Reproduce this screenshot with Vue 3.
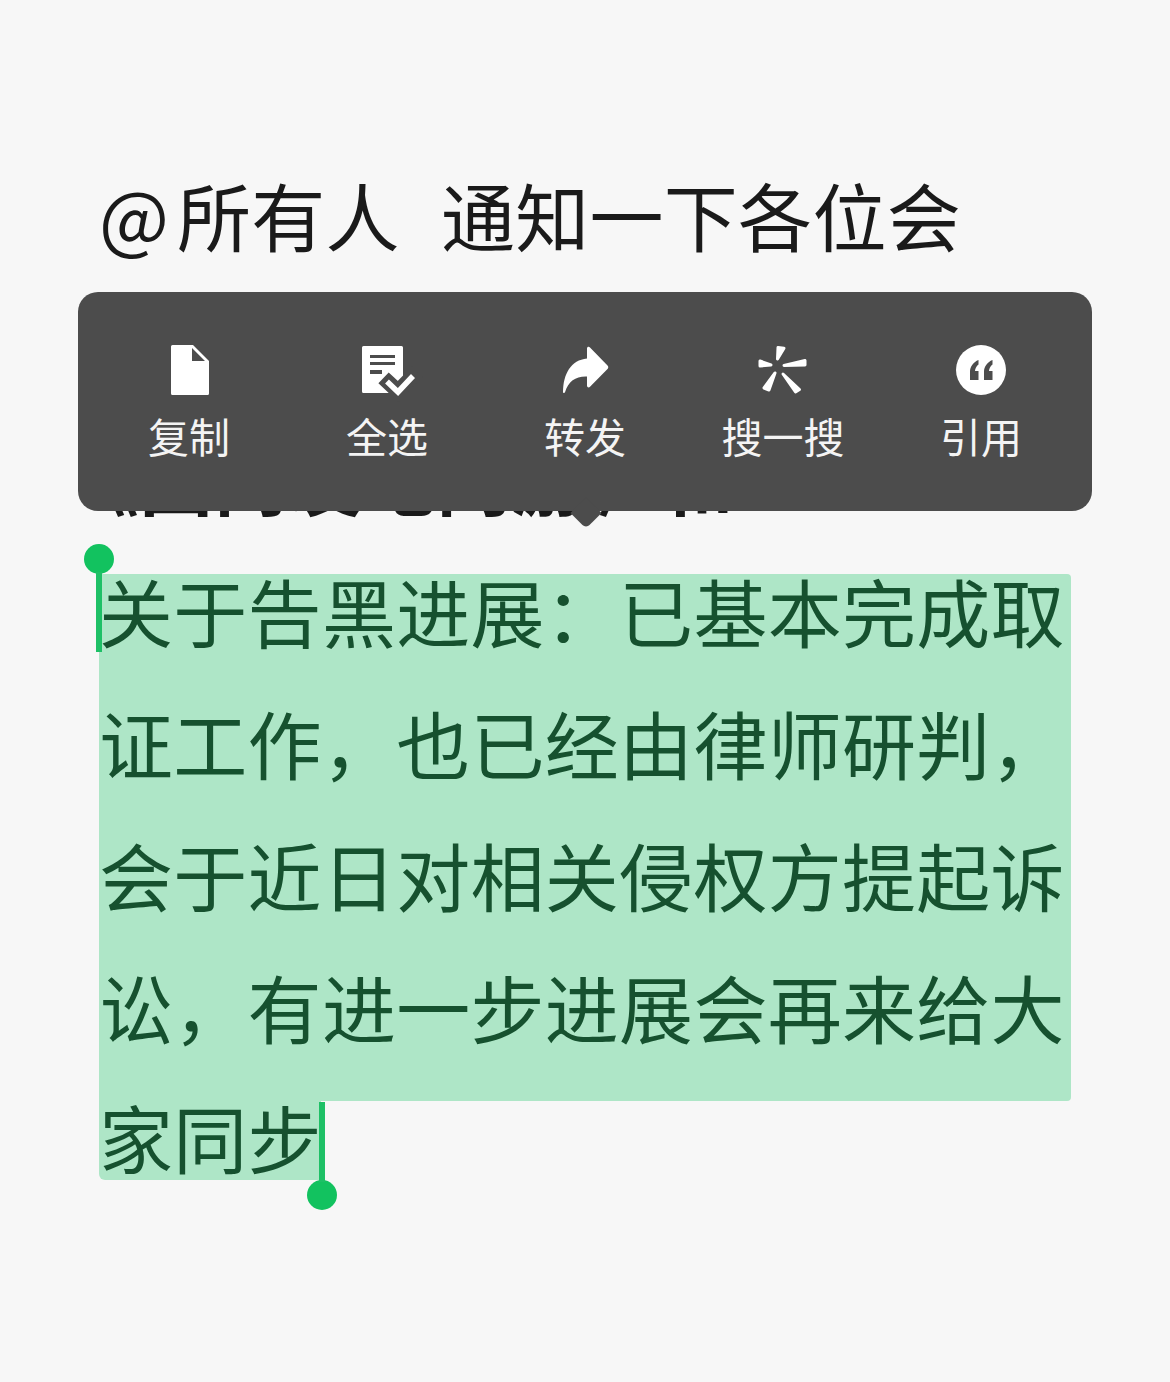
<script setup>
const fullLines = [
  '关于告黑进展：已基本完成取',
  '证工作，也已经由律师研判，',
  '会于近日对相关侵权方提起诉',
  '讼，有进一步进展会再来给大'
]
const lastLine = '家同步'
const actions = [
  { key: 'copy', label: '复制' },
  { key: 'all', label: '全选' },
  { key: 'forward', label: '转发' },
  { key: 'search', label: '搜一搜' },
  { key: 'quote', label: '引用' }
]
</script>

<template>
  <div class="page">
    <div class="article">
      <div class="line title"><span class="at">@</span>所有人<span class="gap"></span>通知一下各位会</div>
      <div class="line" aria-hidden="true">&nbsp;</div>
      <div class="line bold"><span class="narrow">《</span>国内发电网游》和</div>
      <div class="selected">
        <div class="selected-lines">
          <div v-for="l in fullLines" :key="l" class="line sel-line">{{ l }}</div>
        </div>
      </div>
      <div class="selected-last">
        <span class="last-text">{{ lastLine }}</span>
      </div>
    </div>

    <div class="handle handle-start"></div>
    <div class="handle handle-end"></div>

    <div class="menu">
      <div v-for="a in actions" :key="a.key" class="action">
        <svg class="icon" viewBox="0 0 50 50" aria-hidden="true">
          <template v-if="a.key === 'copy'">
            <path fill="#fff" fill-rule="evenodd" d="M8.500 0H29L45 16V48.500A1.500 1.500 0 0 1 43.500 50H8.500A1.500 1.500 0 0 1 7 48.500V1.500A1.500 1.500 0 0 1 8.500 0ZM28 3V16H41Z" />
          </template>
          <template v-else-if="a.key === 'all'">
            <path fill="#fff" fill-rule="evenodd" d="M1.500 1H39.500A1.500 1.500 0 0 1 41 2.500V46.500A1.500 1.500 0 0 1 39.500 48H1.500A1.500 1.500 0 0 1 0 46.500V2.500A1.500 1.500 0 0 1 1.500 1ZM8 10V13H33V10ZM8 17V20H33V17ZM8 25V29H20V25Z" />
            <path fill="none" stroke="#4c4c4c" stroke-width="15" stroke-linecap="square" d="M27 38 36 46.500 50 32" />
            <path fill="none" stroke="#fff" stroke-width="5.500" d="M25 36.500 36 47 51 31" />
          </template>
          <template v-else-if="a.key === 'forward'">
            <path fill="#fff" d="M27 3.500C27 1.800 28.800 1.200 30 2.400L47.500 20.500C48.500 21.600 48.500 23 47.500 24L30 41.800C28.800 43 27 42.300 27 40.500V31.500C16 31 8.500 36 5 47.300 4.500 48.500 3 48.300 3 47 3 29 11 15 27 13.500Z" />
          </template>
          <template v-else-if="a.key === 'search'">
            <g fill="#fff" stroke="#fff" stroke-width="3" stroke-linejoin="round">
              <path d="M19.500 14 20 2.500 26 3.200Z" />
              <path d="M13 20 2 16 2 21Z" />
              <path d="M26 20.500 47 15.500 47 20Z" />
              <path d="M17 28 6 43 11 45Z" />
              <path d="M25 29 37.500 47 41.500 44.500Z" />
            </g>
          </template>
          <template v-else>
            <circle cx="25" cy="25" r="25" fill="#fff" />
            <path fill="#4c4c4c" d="M22.500 15C17.500 17 14 21.500 14 26.500V35H22.500V26H19C19 23.500 20.500 21 22.500 19.500Z" />
            <path fill="#4c4c4c" d="M36.500 15C31.500 17 28 21.500 28 26.500V35H36.500V26H33C33 23.500 34.500 21 36.500 19.500Z" />
          </template>
        </svg>
        <span class="label">{{ a.label }}</span>
      </div>
      <div class="arrow"></div>
    </div>
  </div>
</template>

<style>
html, body { margin: 0; background: #f7f7f7; }
</style>

<style scoped>
.page {
  position: relative;
  width: 1170px;
  height: 1382px;
  overflow: hidden;
  background: #f7f7f7;
  font-family: "Noto Sans CJK SC", "Noto Sans", sans-serif;
}
.article {
  padding: 148px 0 0 99px;
}
.line {
  height: 132px;
  line-height: 132px;
  font-size: 74px;
  letter-spacing: 0.3px;
  white-space: pre;
  color: #1a1a1a;
}
.at {
  display: inline-block;
  width: 78px;
}
.gap {
  display: inline-block;
  width: 41px;
}
.bold { font-weight: 700; }
.narrow { margin-left: -34px; }
.selected {
  margin-top: 30px;
  width: 972px;
  height: 527px;
  background: #aee6c7;
  border-radius: 4px 4px 4px 0;
  display: flow-root;
}
.selected-lines { margin-top: -30px; }
.sel-line { color: #16512f; }
.selected-last {
  width: 222px;
  height: 79px;
  line-height: 70px;
  font-size: 74px;
  letter-spacing: 0.3px;
  background: #aee6c7;
  border-radius: 0 0 0 6px;
  color: #16512f;
  white-space: pre;
}
.handle {
  position: absolute;
  width: 30px;
  height: 30px;
  border-radius: 50%;
  background: #12c25f;
}
.handle::after {
  content: "";
  position: absolute;
  left: 12px;
  width: 6px;
  height: 80px;
  background: #1ec066;
}
.handle-start { left: 84px; top: 544px; }
.handle-start::after { top: 28px; }
.handle-end { left: 307px; top: 1180px; }
.handle-end::after { bottom: 28px; }
.menu {
  position: absolute;
  left: 78px;
  top: 292px;
  width: 1014px;
  height: 219px;
  box-sizing: border-box;
  padding: 53px 12px 0;
  display: grid;
  grid-template-columns: repeat(5, 198px);
  background: #4c4c4c;
  border-radius: 20px;
}
.action {
  display: flex;
  flex-direction: column;
  align-items: center;
  gap: 11px;
}
.icon { width: 50px; height: 50px; display: block; overflow: visible; }
.label {
  font-size: 41px;
  line-height: 58px;
  color: #f4f4f4;
}
.arrow {
  position: absolute;
  left: 497px;
  bottom: -13px;
  width: 22px;
  height: 22px;
  background: #4c4c4c;
  transform: rotate(45deg);
  border-radius: 0 0 5px 0;
}
</style>
